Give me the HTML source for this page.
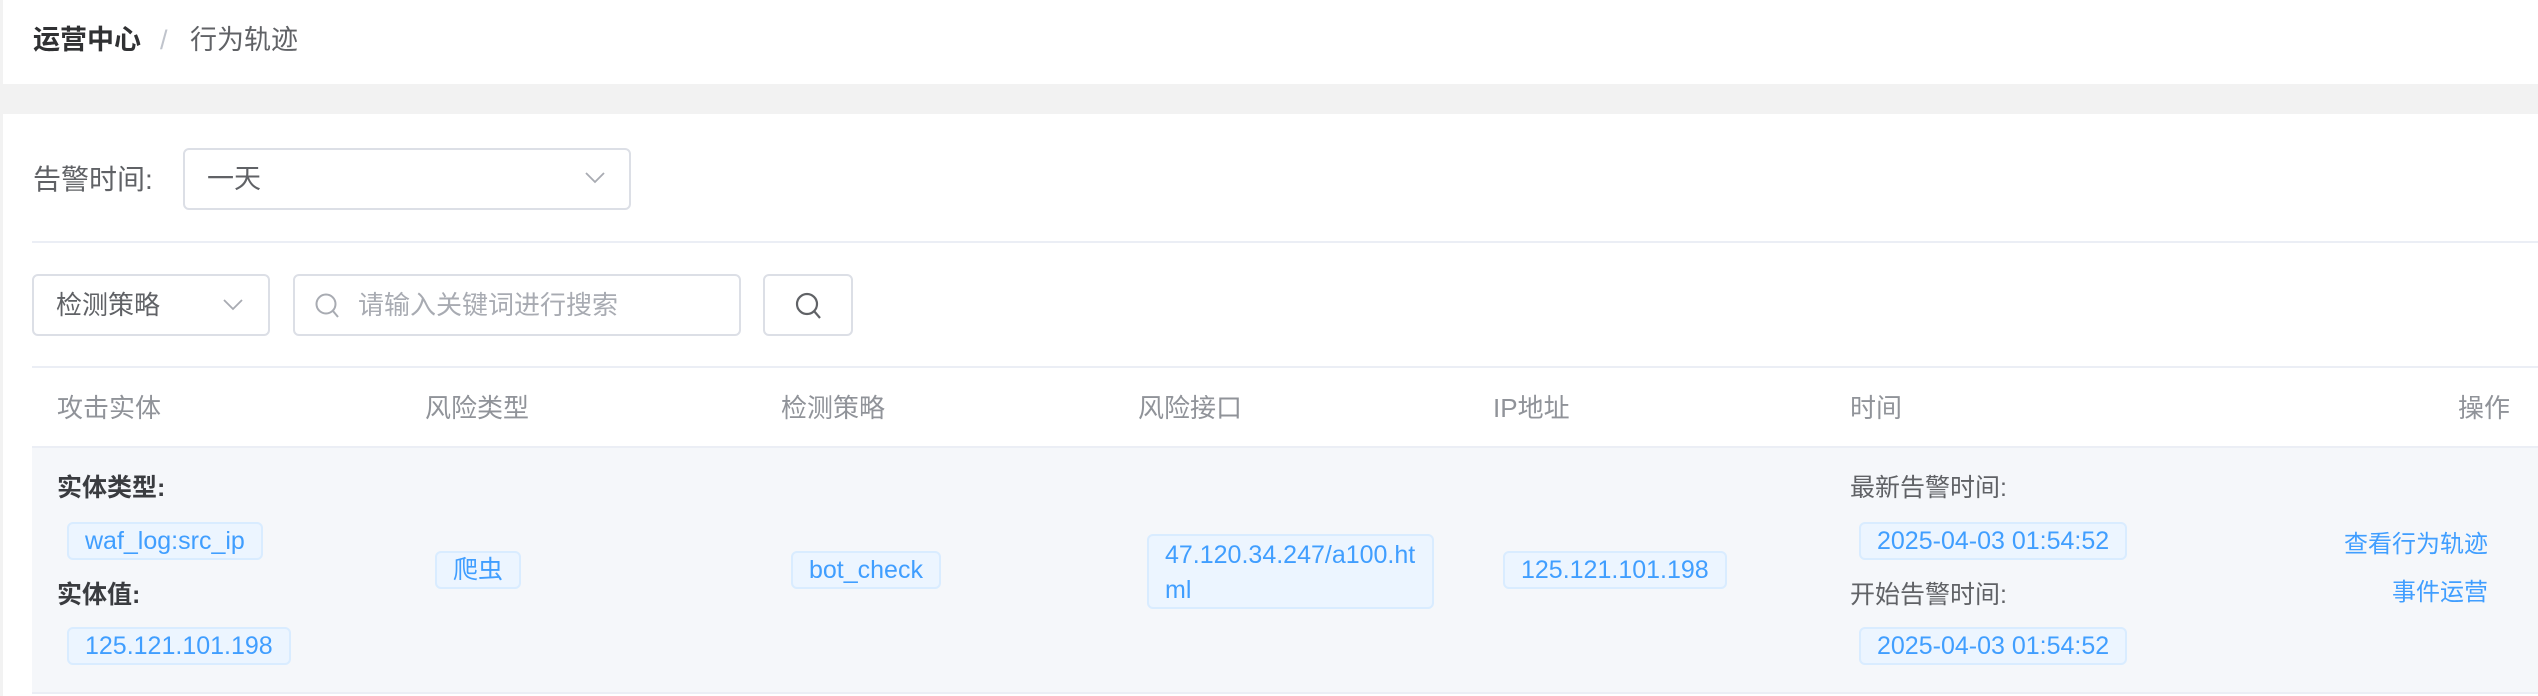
<!DOCTYPE html>
<html><head><meta charset="utf-8"><style>
*{box-sizing:border-box;margin:0;padding:0}
body{width:2538px;height:696px;background:#fff;font-family:"Liberation Sans","Noto Sans CJK SC",sans-serif;position:relative;overflow:hidden;color:#606266}
.a{position:absolute}
.hdr{left:0;top:0;width:2538px;height:84px;background:#fff;border-left:3px solid #f2f2f2}
.band{left:0;top:84px;width:2538px;height:30px;background:#f2f2f2}
.main{left:0;top:114px;width:2538px;height:582px;border-left:3px solid #f2f2f2}
.box{border:2px solid #dcdfe6;border-radius:6px;background:#fff}
.tag{position:absolute;background:#ecf5ff;border:2px solid #d9ecff;border-radius:6px;color:#409eff;font-size:25px;line-height:34px;padding:0 16px;white-space:nowrap}
.th{position:absolute;top:392px;font-size:26px;color:#909399;line-height:32px}
.lbl{position:absolute;font-size:25px;color:#303133;line-height:32px}
.lk{position:absolute;font-size:24px;color:#409eff;line-height:30px}
</style></head><body>
<div class="a hdr"></div>
<div class="a band"></div>
<div class="a main"></div>
<div class="a" style="left:33px;top:23px;font-size:27px;line-height:34px;color:#303133;font-weight:bold">运营中心</div>
<div class="a" style="left:160px;top:23px;font-size:27px;line-height:34px;color:#c0c4cc">/</div>
<div class="a" style="left:190px;top:23px;font-size:27px;line-height:34px;color:#606266">行为轨迹</div>

<div class="a" style="left:33px;top:163px;font-size:28px;line-height:34px;color:#606266">告警时间:</div>
<div class="a box" style="left:183px;top:148px;width:448px;height:62px"></div>
<div class="a" style="left:207px;top:162px;font-size:27px;line-height:34px;color:#606266">一天</div>
<svg class="a" style="left:584px;top:170px" width="22" height="16" viewBox="0 0 22 16"><path d="M2 3 L11 12 L20 3" fill="none" stroke="#a8abb2" stroke-width="1.8"/></svg>
<div class="a" style="left:32px;top:241px;width:2506px;height:2px;background:#ebeef5"></div>

<div class="a box" style="left:32px;top:274px;width:238px;height:62px"></div>
<div class="a" style="left:56px;top:288px;font-size:26px;line-height:34px;color:#606266">检测策略</div>
<svg class="a" style="left:222px;top:297px" width="22" height="16" viewBox="0 0 22 16"><path d="M2 3 L11 12 L20 3" fill="none" stroke="#a8abb2" stroke-width="1.8"/></svg>
<div class="a box" style="left:293px;top:274px;width:448px;height:62px"></div>
<svg class="a" style="left:314px;top:292px" width="26" height="28" viewBox="0 0 26 28"><circle cx="12" cy="12" r="9.5" fill="none" stroke="#a8abb2" stroke-width="2"/><path d="M19 19 L24 25" stroke="#a8abb2" stroke-width="2"/></svg>
<div class="a" style="left:358px;top:288px;font-size:26px;line-height:34px;color:#a8abb2">请输入关键词进行搜索</div>
<div class="a box" style="left:763px;top:274px;width:90px;height:62px"></div>
<svg class="a" style="left:794px;top:291px" width="28" height="30" viewBox="0 0 28 30"><circle cx="13" cy="13" r="10" fill="none" stroke="#606266" stroke-width="2.2"/><path d="M20 20 L26 27" stroke="#606266" stroke-width="2.2"/></svg>

<div class="a" style="left:32px;top:366px;width:2506px;height:2px;background:#ebeef5"></div>
<div class="th" style="left:57px">攻击实体</div>
<div class="th" style="left:425px">风险类型</div>
<div class="th" style="left:781px">检测策略</div>
<div class="th" style="left:1138px">风险接口</div>
<div class="th" style="left:1493px">IP地址</div>
<div class="th" style="left:1850px">时间</div>
<div class="th" style="left:2458px">操作</div>
<div class="a" style="left:32px;top:446px;width:2506px;height:248px;background:#f5f7fa;border-top:2px solid #ebeef5;border-bottom:2px solid #ebeef5"></div>

<div class="lbl" style="left:57px;top:472px;font-weight:bold;color:#3a3c40">实体类型:</div>
<div class="tag" style="left:67px;top:522px">waf_log:src_ip</div>
<div class="lbl" style="left:57px;top:579px;font-weight:bold;color:#3a3c40">实体值:</div>
<div class="tag" style="left:67px;top:627px">125.121.101.198</div>
<div class="tag" style="left:435px;top:551px">爬虫</div>
<div class="tag" style="left:791px;top:551px">bot_check</div>
<div class="tag" style="left:1147px;top:534px;width:287px;height:75px;line-height:35px;padding:2px 16px">47.120.34.247/a100.ht<br>ml</div>
<div class="tag" style="left:1503px;top:551px">125.121.101.198</div>
<div class="lbl" style="left:1850px;top:472px;color:#606266">最新告警时间:</div>
<div class="tag" style="left:1859px;top:522px">2025-04-03 01:54:52</div>
<div class="lbl" style="left:1850px;top:579px;color:#606266">开始告警时间:</div>
<div class="tag" style="left:1859px;top:627px">2025-04-03 01:54:52</div>
<div class="lk" style="right:50px;top:530px">查看行为轨迹</div>
<div class="lk" style="right:50px;top:578px">事件运营</div>
</body></html>
